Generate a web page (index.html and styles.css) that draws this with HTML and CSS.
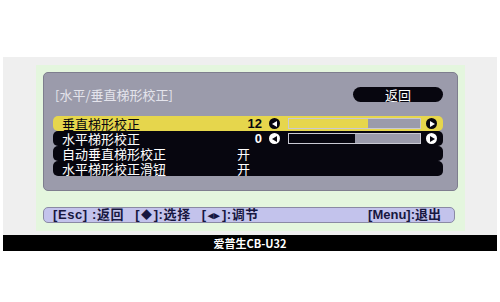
FILE: index.html
```html
<!DOCTYPE html>
<html lang="zh">
<head>
<meta charset="utf-8">
<link rel="stylesheet" href="styles.css">
</head>
<body>
<div class="frame">
  <div class="screen">
    <div class="panel">
      <div class="header">
        <span class="title">[水平/垂直梯形校正]</span>
        <span class="back">返回</span>
      </div>
      <div class="list">
        <div class="row sel">
          <span class="label">垂直梯形校正</span>
          <span class="num">12</span>
          <span class="arrow left"></span>
          <span class="bar"><span class="fill" style="width:79px"></span></span>
          <span class="arrow right"></span>
        </div>
        <div class="row">
          <span class="label">水平梯形校正</span>
          <span class="num">0</span>
          <span class="arrow left"></span>
          <span class="bar"><span class="fill" style="width:66px"></span></span>
          <span class="arrow right"></span>
        </div>
        <div class="row">
          <span class="label">自动垂直梯形校正</span>
          <span class="val">开</span>
        </div>
        <div class="row">
          <span class="label">水平梯形校正滑钮</span>
          <span class="val">开</span>
        </div>
      </div>
    </div>
    <div class="help">
      <span class="keys"><span class="k">[Esc] :返回</span><span class="k">[<span class="g">◆</span>]:选择</span><span class="k">[<span class="g">◂▸</span>]:调节</span></span>
      <span class="keys">[Menu]:退出</span>
    </div>
  </div>
</div>
<div class="caption">爱普生CB-U32</div>
</body>
</html>
```

FILE: styles.css
```css
html, body {
  margin: 0;
  padding: 0;
  background: #ffffff;
  font-family: "Noto Sans CJK SC", "Liberation Sans", sans-serif;
}
body {
  padding-top: 57px;
  width: 500px;
  height: 302px;
  box-sizing: border-box;
}
.frame {
  margin: 0 3px;
  height: 178px;
  background: #efefef;
  padding-top: 8px;
  box-sizing: border-box;
}
.screen {
  margin-left: 33px;
  width: 429px;
  height: 166px;
  background: #e4f6de;
  padding: 7px 0 0 7px;
  box-sizing: border-box;
}
.panel {
  width: 415px;
  height: 119px;
  box-sizing: border-box;
  background: #9b9bab;
  border: 1px solid #7e7e8e;
  border-radius: 5px;
  padding: 14px 14px 0 9px;
}
.header {
  display: flex;
  justify-content: space-between;
  align-items: center;
  height: 15px;
}
.title {
  margin-left: 2px;
  color: #e4e4ec;
  font-size: 13px;
  line-height: 15px;
}
.back {
  width: 90px;
  height: 15px;
  background: #07060f;
  border-radius: 8px;
  color: #ffffff;
  font-size: 13px;
  line-height: 15px;
  text-align: center;
}
.list {
  margin-top: 14px;
  width: 390px;
}
.row {
  display: flex;
  align-items: center;
  height: 15px;
  background: #07060f;
  border-radius: 5px;
  color: #ffffff;
  font-size: 13px;
  line-height: 15px;
  padding-left: 9px;
}
.row.sel {
  background: #e6d64c;
  color: #07060f;
}
.label {
  width: 175px;
  flex: none;
}
.num {
  width: 25px;
  text-align: right;
  font-family: "Liberation Sans", sans-serif;
  font-weight: bold;
  font-size: 13px;
  margin-right: 7px;
}
.arrow {
  width: 11px;
  height: 11px;
  border-radius: 50%;
  background: #ffffff;
  position: relative;
  flex: none;
}
.sel .arrow {
  background: #07060f;
}
.arrow::after {
  content: "";
  position: absolute;
  top: 2.5px;
  width: 0;
  height: 0;
  border-top: 3px solid transparent;
  border-bottom: 3px solid transparent;
}
.arrow.left::after {
  left: 2.5px;
  border-right: 5px solid #07060f;
}
.arrow.right::after {
  left: 4px;
  border-left: 5px solid #07060f;
}
.sel .arrow.left::after { border-right-color: #ffffff; }
.sel .arrow.right::after { border-left-color: #ffffff; }
.bar {
  width: 133px;
  height: 11px;
  box-sizing: border-box;
  margin-left: 8px;
  margin-right: 5px;
  background: #9b9bab;
  border: 1px solid #c9c9d2;
  display: flex;
}
.fill {
  height: 100%;
  background: #07060f;
}
.sel .fill {
  background: #e6d64c;
}
.help {
  margin-top: 16px;
  width: 412px;
  height: 16px;
  box-sizing: border-box;
  background: #c3c3ec;
  border: 1px solid #8a8aa4;
  border-radius: 5px;
  display: flex;
  justify-content: space-between;
  align-items: center;
  padding: 0 13px 0 9px;
  color: #17173f;
  font-family: "Liberation Sans", "Noto Sans CJK SC", sans-serif;
  font-size: 13px;
  font-weight: bold;
  line-height: 14px;
}
.keys {
  display: flex;
  gap: 11px;
}
.keys:first-child {
  letter-spacing: 0.6px;
}
.g {
  font-size: 11px;
  padding: 0 1px;
}
.caption {
  margin: 0 3px;
  height: 16px;
  background: #000000;
  color: #ffffff;
  font-size: 11px;
  font-weight: bold;
  line-height: 16px;
  text-align: center;
}
```
